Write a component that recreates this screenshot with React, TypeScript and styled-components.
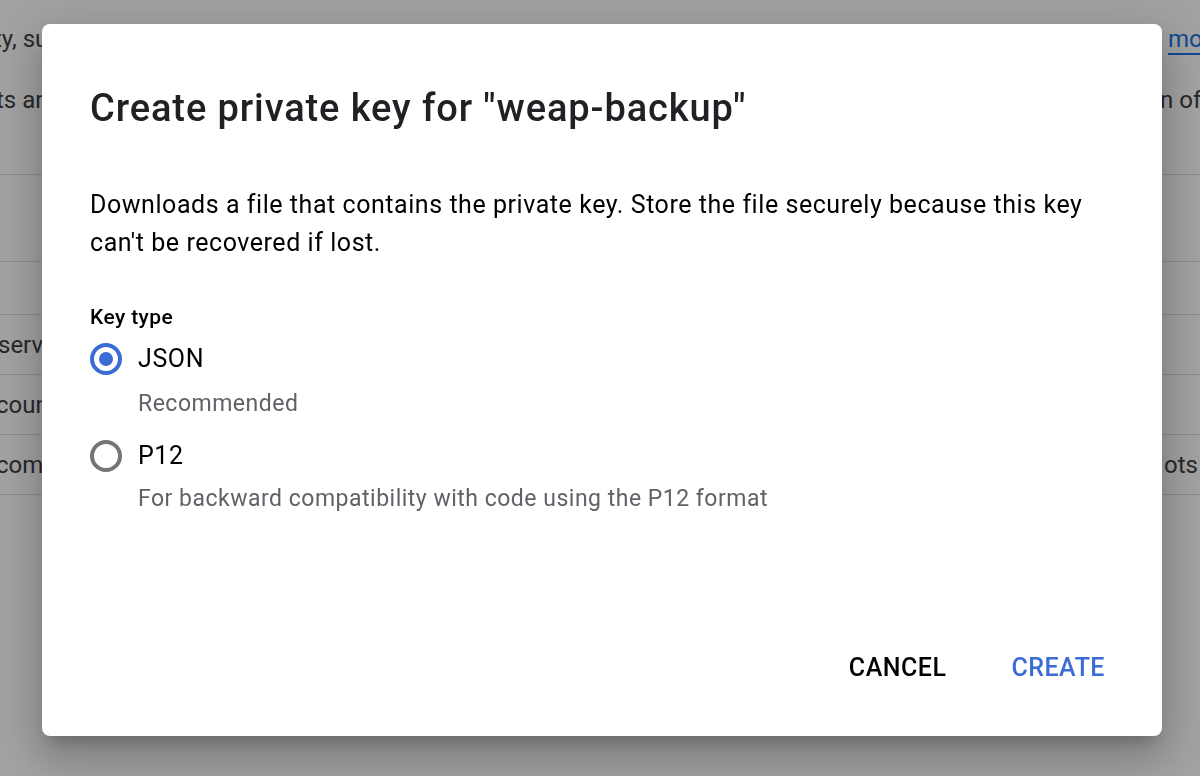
import * as React from "react";
import styled, { createGlobalStyle } from "styled-components";

const GlobalStyle = createGlobalStyle`
  html, body {
    margin: 0;
    padding: 0;
    width: 1200px;
    height: 776px;
    overflow: hidden;
    background: #ffffff;
    font-family: Roboto, "Liberation Sans", Arial, sans-serif;
  }
  * {
    box-sizing: border-box;
  }
`;

/* page that sits behind the modal */

const Page = styled.div`
  width: 1200px;
  height: 776px;
  overflow: hidden;
  color: #3c4043;
  font-size: 24px;
`;

const TextLine = styled.div<{ $top: number }>`
  display: flex;
  justify-content: space-between;
  height: 36px;
  line-height: 36px;
  margin-top: ${p => p.$top}px;
  white-space: nowrap;
`;

const LeftBit = styled.span<{ $shift: number }>`
  margin-left: ${p => p.$shift}px;
`;

const RightBit = styled.span<{ $width: number }>`
  width: ${p => p.$width}px;
  overflow: hidden;
`;

const Link = styled.a`
  color: #1a73e8;
  text-decoration: underline;
  text-underline-offset: 6px;
`;

const Table = styled.div`
  margin-top: 56px;
  border-top: 1px solid #dadce0;
`;

const TableRow = styled.div<{ $height: number }>`
  display: flex;
  justify-content: space-between;
  align-items: center;
  height: ${p => p.$height}px;
  border-bottom: 1px solid #dadce0;
  white-space: nowrap;
`;

/* modal */

const Scrim = styled.div`
  position: fixed;
  inset: 0;
  background: rgba(0, 0, 0, 0.37);
  display: flex;
  align-items: flex-start;
  padding: 24px 0 0 42px;
`;

const Dialog = styled.div`
  width: 1120px;
  height: 712px;
  background: #ffffff;
  border-radius: 8px;
  padding: 62px 48px 0;
  display: flex;
  flex-direction: column;
  color: #202124;
  box-shadow: 0 24px 38px 3px rgba(0, 0, 0, 0.14),
    0 9px 46px 8px rgba(0, 0, 0, 0.12), 0 11px 15px -7px rgba(0, 0, 0, 0.2);
`;

const Title = styled.h2`
  margin: 0;
  font-size: 38px;
  line-height: 44px;
  letter-spacing: 0.9px;
  font-weight: 500;
  color: #202124;
`;

const Body = styled.p`
  margin: 56px 0 0;
  font-size: 25px;
  line-height: 38px;
  letter-spacing: 0.55px;
  color: #000000;
`;

const FieldLabel = styled.div`
  margin-top: 41px;
  font-size: 21px;
  line-height: 28px;
  letter-spacing: 0.4px;
  font-weight: 500;
  color: #000000;
`;

const Option = styled.label<{ $gap: number }>`
  display: flex;
  align-items: center;
  gap: 16px;
  height: 40px;
  margin-top: ${p => p.$gap}px;
  font-size: 25px;
  line-height: 40px;
  letter-spacing: 0.6px;
  color: #000000;
  cursor: pointer;
`;

const Radio = styled.span<{ $checked: boolean }>`
  width: 32px;
  height: 32px;
  border-radius: 50%;
  border: 4px solid ${p => (p.$checked ? "#3b6bd4" : "#757575")};
  display: flex;
  align-items: center;
  justify-content: center;

  &::after {
    content: "";
    width: 14px;
    height: 14px;
    border-radius: 50%;
    background: ${p => (p.$checked ? "#3b6bd4" : "transparent")};
  }
`;

const Hint = styled.div<{ $gap: number }>`
  margin: ${p => p.$gap}px 0 0 48px;
  font-size: 23px;
  line-height: 30px;
  letter-spacing: 0.5px;
  color: #5f6368;
`;

const Footer = styled.div`
  margin-top: auto;
  padding-bottom: 44px;
  display: flex;
  justify-content: flex-end;
  gap: 47px;
`;

const Button = styled.button<{ $primary?: boolean }>`
  height: 48px;
  padding: 0 9px;
  border: none;
  background: none;
  font-family: inherit;
  font-size: 25px;
  font-weight: 500;
  line-height: 48px;
  letter-spacing: 0.5px;
  color: ${p => (p.$primary ? "#3b6bd4" : "#000000")};
  cursor: pointer;
`;

const App = () => {
  const [keyType, setKeyType] = React.useState("json");

  return (
    <>
      <GlobalStyle />
      <Page>
        <TextLine $top={21}>
          <LeftBit $shift={-6}>ty, such as the access granted to each account</LeftBit>
          <RightBit $width={32}>
            <Link>more</Link>
          </RightBit>
        </TextLine>
        <TextLine $top={25}>
          <LeftBit $shift={-4}>ts are listed below with the current version of</LeftBit>
          <RightBit $width={40}>n of</RightBit>
        </TextLine>
        <Table>
          <TableRow $height={87} />
          <TableRow $height={53} />
          <TableRow $height={60}>
            <LeftBit $shift={-2}>service-account</LeftBit>
          </TableRow>
          <TableRow $height={60}>
            <LeftBit $shift={-4}>count</LeftBit>
          </TableRow>
          <TableRow $height={60}>
            <LeftBit $shift={-4}>compute</LeftBit>
            <RightBit $width={36}>ots</RightBit>
          </TableRow>
        </Table>
      </Page>

      <Scrim>
        <Dialog role="dialog">
          <Title>Create private key for "weap-backup"</Title>
          <Body>
            Downloads a file that contains the private key. Store the file securely because this key
            can't be recovered if lost.
          </Body>
          <FieldLabel>Key type</FieldLabel>
          <Option $gap={8} onClick={() => setKeyType("json")}>
            <Radio $checked={keyType === "json"} />
            JSON
          </Option>
          <Hint $gap={10}>Recommended</Hint>
          <Option $gap={17} onClick={() => setKeyType("p12")}>
            <Radio $checked={keyType === "p12"} />
            P12
          </Option>
          <Hint $gap={8}>For backward compatibility with code using the P12 format</Hint>
          <Footer>
            <Button>CANCEL</Button>
            <Button $primary>CREATE</Button>
          </Footer>
        </Dialog>
      </Scrim>
    </>
  );
};

export default App;
